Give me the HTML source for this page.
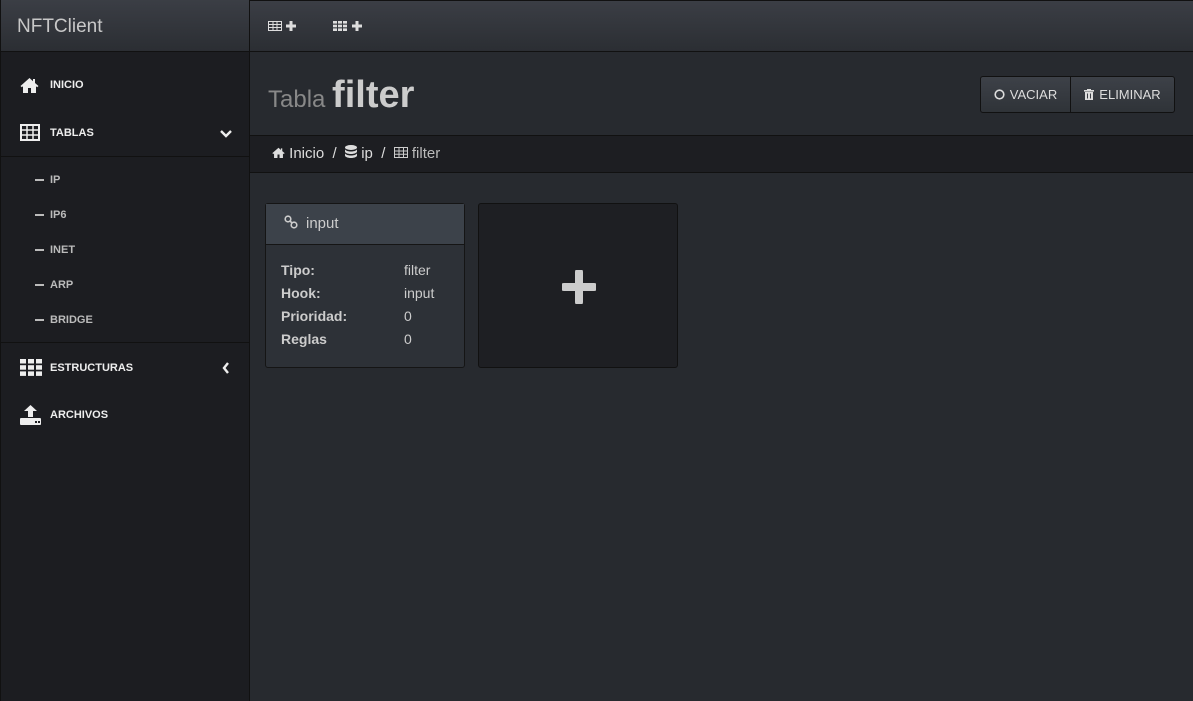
<!DOCTYPE html>
<html><head><style>
*{box-sizing:border-box;margin:0;padding:0}
body{width:1193px;height:701px;overflow:hidden;background:#272a2f;font-family:"Liberation Sans",sans-serif;color:#ddd;position:relative}
.side{position:absolute;left:0;top:0;width:250px;height:701px;background:#1c1d21;border-right:1px solid #111;border-left:1px solid #111}
.brand{height:52px;background:linear-gradient(#3b3e45,#2b2e33);border-bottom:1px solid #111;font-size:19px;color:#c8c8c8;padding:16px 0 0 16px}
.top{position:absolute;left:250px;top:0;right:0;height:52px;background:linear-gradient(#3b3e45,#2b2e33);border-bottom:1px solid #111;border-top:1px solid #111}
.nav{position:absolute;left:19px;font-size:11px;font-weight:bold;color:#eee;display:flex;align-items:center}
.nav .ic{width:30px;display:flex;align-items:center}
.sub{position:absolute;left:34px;font-size:11px;font-weight:bold;color:#bbb}
.sub:before{content:"";display:inline-block;width:9px;height:2px;background:#bbb;vertical-align:middle;margin-right:6px}
.hr{position:absolute;left:0;width:249px;height:1px;background:#111}
.title{position:absolute;left:268px;top:74px;font-size:24px;color:#888}
.title b{font-size:38px;color:#ccc}
.btns{position:absolute;left:980px;top:76px;height:37px;width:195px;border:1px solid #111;border-radius:3px;background:linear-gradient(#3d4148,#2f3338);display:flex;font-size:13px;color:#ddd}
.btns div{display:flex;align-items:center;justify-content:center}
.bc{position:absolute;left:250px;right:0;top:135px;height:38px;background:#1d1e22;border-top:1px solid #111;border-bottom:1px solid #111;font-size:15px;color:#ddd;padding:9px 0 0 22px}
.card{position:absolute;left:265px;top:203px;width:200px;height:165px;background:#2d3137;border:1px solid #151515;border-radius:3px}
.ch{height:41px;background:#3c424a;border-bottom:1px solid #151515;font-size:15px;color:#ccc;padding:11px 0 0 18px}
.row{position:absolute;left:15px;font-size:14px;color:#ccc}
.row b{display:inline-block;width:123px}
.add{position:absolute;left:478px;top:203px;width:200px;height:165px;background:#1e1f23;border:1px solid #111;border-radius:3px}
</style></head><body>
<div class="side">
<div class="brand">NFTClient</div>
<div class="nav" style="top:77px"><span class="ic"><svg width="19" height="16" viewBox="0 0 19 16"><path d="M9.5 1L0.5 9l1.3 1.3L3 9.2V16h5v-5h3v5h5V9.2l1.2 1.1L18.5 9 15 6V2h-2v2.3z" fill="#eee"/></svg></span>INICIO</div>
<div class="nav" style="top:124px"><span class="ic"><svg width="20" height="17" viewBox="0 0 20 17"><rect x="1" y="1" width="18" height="15" fill="none" stroke="#eee" stroke-width="2"/><path d="M1 6h18M1 11h18M7 1v15M13 1v15" stroke="#eee" stroke-width="1.5"/></svg></span>TABLAS</div>
<svg style="position:absolute;left:219px;top:130px" width="12" height="8"><path d="M1 1l5 5 5-5" stroke="#eee" stroke-width="2.4" fill="none"/></svg>
<div class="hr" style="top:156px"></div>
<div class="sub" style="top:174px">IP</div>
<div class="sub" style="top:209px">IP6</div>
<div class="sub" style="top:244px">INET</div>
<div class="sub" style="top:279px">ARP</div>
<div class="sub" style="top:314px">BRIDGE</div>
<div class="hr" style="top:342px"></div>
<div class="nav" style="top:359px"><span class="ic"><svg width="22" height="17" viewBox="0 0 22 17"><g fill="#eee"><rect x="0" y="0" width="6" height="4.5"/><rect x="8" y="0" width="6" height="4.5"/><rect x="16" y="0" width="6" height="4.5"/><rect x="0" y="6.2" width="6" height="4.5"/><rect x="8" y="6.2" width="6" height="4.5"/><rect x="16" y="6.2" width="6" height="4.5"/><rect x="0" y="12.4" width="6" height="4.5"/><rect x="8" y="12.4" width="6" height="4.5"/><rect x="16" y="12.4" width="6" height="4.5"/></g></svg></span>ESTRUCTURAS</div>
<svg style="position:absolute;left:221px;top:362px" width="8" height="12"><path d="M6 1L2 6l4 5" stroke="#eee" stroke-width="2.4" fill="none"/></svg>
<div class="nav" style="top:405px"><span class="ic"><svg width="21" height="20" viewBox="0 0 21 20"><path d="M10.5 0L4 6h4v6h5V6h4z" fill="#eee"/><rect x="0" y="13" width="21" height="7" rx="1" fill="#eee"/><rect x="15" y="16" width="2" height="2" fill="#1c1d21"/><rect x="18" y="16" width="2" height="2" fill="#1c1d21"/></svg></span>ARCHIVOS</div>
</div>
<div class="top">
<svg style="position:absolute;left:18px;top:19px" width="30" height="12" viewBox="0 0 30 12"><rect x="0.5" y="1.5" width="13" height="9" fill="none" stroke="#ddd"/><path d="M0.5 4.5h13M0.5 7.5h13M5 1.5v9M9 1.5v9" stroke="#ddd"/><path d="M23 1v10M18 6h10" stroke="#ddd" stroke-width="3"/></svg>
<svg style="position:absolute;left:83px;top:19px" width="30" height="12" viewBox="0 0 30 12"><g fill="#ddd"><rect x="0" y="1" width="4" height="2.6"/><rect x="5" y="1" width="4" height="2.6"/><rect x="10" y="1" width="4" height="2.6"/><rect x="0" y="4.7" width="4" height="2.6"/><rect x="5" y="4.7" width="4" height="2.6"/><rect x="10" y="4.7" width="4" height="2.6"/><rect x="0" y="8.4" width="4" height="2.6"/><rect x="5" y="8.4" width="4" height="2.6"/><rect x="10" y="8.4" width="4" height="2.6"/></g><path d="M24 1v10M19 6h10" stroke="#ddd" stroke-width="3"/></svg>
</div>
<div class="title">Tabla <b>filter</b></div>
<div class="btns"><div style="width:90px;border-right:1px solid #111"><svg width="11" height="11" style="margin-right:5px"><circle cx="5.5" cy="5.5" r="4.3" stroke="#ddd" stroke-width="1.6" fill="none"/></svg>VACIAR</div><div style="flex:1"><svg width="10" height="11" style="margin-right:5px"><rect x="0" y="1" width="10" height="1.6" fill="#ddd"/><rect x="3" y="0" width="4" height="1.5" fill="#ddd"/><path d="M1 3h8v8H1z" fill="#ddd"/><path d="M3.5 4.5v5M6.5 4.5v5" stroke="#3a3d44"/></svg>ELIMINAR</div></div>
<div class="bc"><svg width="13" height="11" viewBox="0 0 19 16"><path d="M9.5 1L0.5 9l1.3 1.3L3 9.2V16h5v-5h3v5h5V9.2l1.2 1.1L18.5 9 15 6V2h-2v2.3z" fill="#ddd"/></svg> Inicio &nbsp;/&nbsp; <svg width="12" height="13" viewBox="0 0 12 13"><ellipse cx="6" cy="2.5" rx="6" ry="2.5" fill="#ddd"/><path d="M0 4v2.5c0 1.4 2.7 2.5 6 2.5s6-1.1 6-2.5V4c0 1.4-2.7 2.5-6 2.5S0 5.4 0 4zM0 8v2.5C0 11.9 2.7 13 6 13s6-1.1 6-2.5V8c0 1.4-2.7 2.5-6 2.5S0 9.4 0 8z" fill="#ddd"/></svg> ip &nbsp;/&nbsp; <svg width="14" height="11" viewBox="0 0 14 11"><rect x="0.5" y="0.5" width="13" height="10" fill="none" stroke="#ccc"/><path d="M0.5 4h13M0.5 7.2h13M5 0.5v10M9.5 0.5v10" stroke="#ccc"/></svg> <span style="color:#bbb">filter</span></div>
<div class="card"><div class="ch"><svg width="14" height="14" viewBox="0 0 14 14" style="vertical-align:-1px;margin-right:8px"><circle cx="4" cy="4" r="2.8" fill="none" stroke="#ccc" stroke-width="1.6"/><circle cx="10" cy="10" r="2.8" fill="none" stroke="#ccc" stroke-width="1.6"/><path d="M5.5 5.5l3 3" stroke="#ccc" stroke-width="1.6"/></svg>input</div>
<div class="row" style="top:58px"><b>Tipo:</b>filter</div>
<div class="row" style="top:81px"><b>Hook:</b>input</div>
<div class="row" style="top:104px"><b>Prioridad:</b>0</div>
<div class="row" style="top:127px"><b>Reglas</b>0</div>
</div>
<div class="add"><svg style="position:absolute;left:83px;top:66px" width="34" height="34" viewBox="0 0 34 34"><path d="M17 2v30M2 17h30" stroke="#ccc" stroke-width="8" stroke-linecap="round"/></svg></div>
</body></html>
